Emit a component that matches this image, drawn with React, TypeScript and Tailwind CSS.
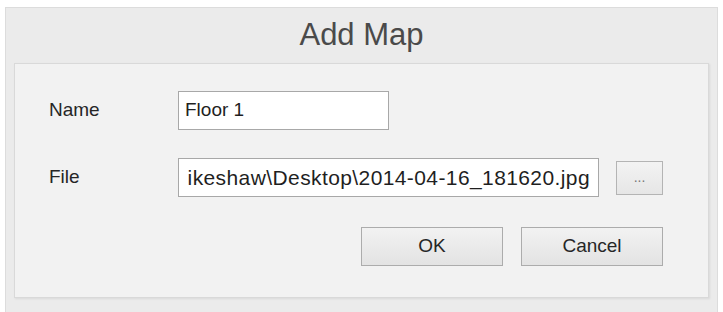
export default function App() {
  return (
    <div
      className="w-[723px] h-[312px] bg-white pt-[7px] px-[5px] overflow-hidden"
      style={{ fontFamily: '"Liberation Sans", Arial, sans-serif' }}
    >
      {/* Dialog frame */}
      <div className="h-[310px] bg-[#ebebeb] border border-[#dcdcdc] px-[8px]">
        {/* Title */}
        <div className="h-[55px] flex items-center justify-center text-[31px] text-[#4a4a4a]">
          Add Map
        </div>

        {/* Content panel */}
        <div className="h-[235px] bg-[#f2f2f2] border border-[#d9d9d9] shadow-[1px_1px_2px_rgba(0,0,0,0.08)] pt-[27px] pl-[34px] pr-[45px]">
          <div className="flex items-center h-[39px]">
            <div className="w-[129px] text-[19px] text-[#262626]">Name</div>
            <div className="w-[211px] h-[39px] bg-white border border-[#a8a8a8] flex items-center pl-[6px] text-[19px] text-[#1f1f1f]">
              Floor 1
            </div>
          </div>

          <div className="flex items-center h-[39px] mt-[28px]">
            <div className="w-[129px] text-[19px] text-[#262626]">File</div>
            <div className="w-[421px] h-[39px] bg-white border border-[#a8a8a8] flex items-center justify-end pr-[8px] overflow-hidden whitespace-nowrap text-[21px] tracking-[0.4px] text-[#1f1f1f]">
              ikeshaw\Desktop\2014-04-16_181620.jpg
            </div>
            <button className="ml-[17px] w-[47px] h-[34px] bg-gradient-to-b from-[#f3f3f3] to-[#e6e6e6] border border-[#b4b4b4] flex items-center justify-center text-[14px] text-[#777] leading-none pb-[2px]">
              ...
            </button>
          </div>

          <div className="flex justify-end gap-[18px] mt-[30px]">
            <button className="w-[142px] h-[39px] bg-gradient-to-b from-[#f2f2f2] to-[#e3e3e3] border border-[#acacac] text-[19px] text-[#262626]">
              OK
            </button>
            <button className="w-[142px] h-[39px] bg-gradient-to-b from-[#f2f2f2] to-[#e3e3e3] border border-[#acacac] text-[19px] text-[#262626]">
              Cancel
            </button>
          </div>
        </div>
      </div>
    </div>
  );
}
